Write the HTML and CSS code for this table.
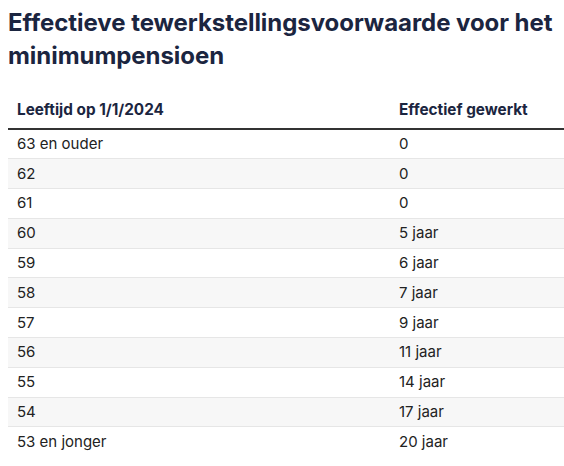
FILE: index.html
```html
<!DOCTYPE html>
<html lang="nl">
<head>
  <meta charset="UTF-8" />
  <meta name="viewport" content="width=device-width, initial-scale=1.0" />
  <title>Effectieve tewerkstellingsvoorwaarde</title>
  <link rel="stylesheet" href="styles.css">
</head>
<body>
  <section class="pensioen">
    <h2>Effectieve tewerkstellingsvoorwaarde voor het minimumpensioen</h2>

    <table class="tabel">
      <thead>
        <tr>
          <th class="col-leeftijd">Leeftijd op 1/1/2024</th>
          <th>Effectief gewerkt</th>
        </tr>
      </thead>
      <tbody>
        <tr><td>63 en ouder</td><td>0</td></tr>
        <tr><td>62</td><td>0</td></tr>
        <tr><td>61</td><td>0</td></tr>
        <tr><td>60</td><td>5 jaar</td></tr>
        <tr><td>59</td><td>6 jaar</td></tr>
        <tr><td>58</td><td>7 jaar</td></tr>
        <tr><td>57</td><td>9 jaar</td></tr>
        <tr><td>56</td><td>11 jaar</td></tr>
        <tr><td>55</td><td>14 jaar</td></tr>
        <tr><td>54</td><td>17 jaar</td></tr>
        <tr><td>53 en jonger</td><td>20 jaar</td></tr>
      </tbody>
    </table>
  </section>
</body>
</html>
```

FILE: styles.css
```css
body {
  font-family: Inter, 'Noto Sans', sans-serif;
  background: white;
  color: #222;
  margin: 0;
  padding: 0 0 0 8px;
}

h2 {
  color: #1b2540;
  font-size: 24px;
  font-weight: 700;
  line-height: 33px;
  letter-spacing: -0.05px;
  margin: 6px 0 0;
}

.tabel {
  width: 100%;
  border-collapse: collapse;
  margin-top: 19px;
  font-size: 15px;
}

.tabel th {
  text-align: left;
  color: #1b2540;
  font-size: 15.3px;
  font-weight: 700;
  padding: 9px 9px 8px;
  line-height: 20px;
  border-bottom: 2px solid #333;
}

.col-leeftijd {
  width: 364px;
}

.tabel td {
  height: 29.8px;
  box-sizing: border-box;
  padding: 0 9px;
  line-height: 20px;
  border-bottom: 1px solid #e6e6e6;
}

.tabel tbody tr:nth-child(even) {
  background: #f7f7f7;
}

.tabel tbody tr:last-child td {
  border-bottom: none;
}
```
